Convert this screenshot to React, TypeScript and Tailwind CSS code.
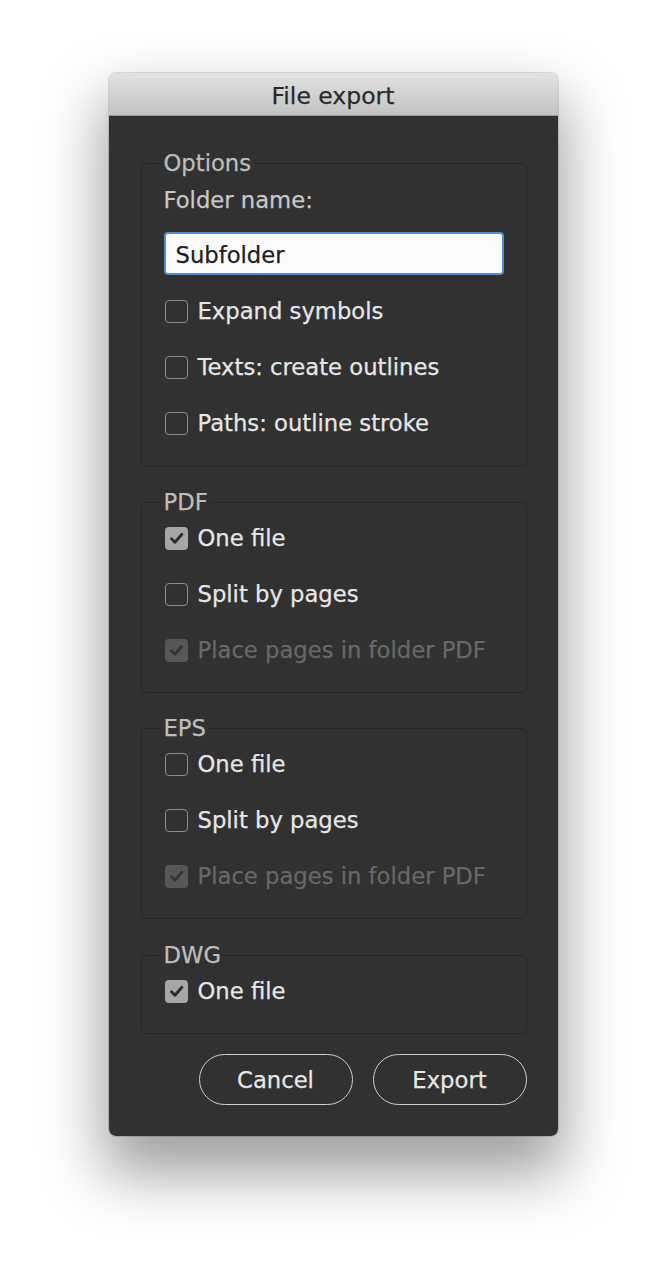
import React from "react";

function Check({ checked = false, disabled = false }: { checked?: boolean; disabled?: boolean }) {
  if (checked) {
    return (
      <span
        className={
          "flex h-[23px] w-[23px] shrink-0 items-center justify-center rounded-[4px] " +
          (disabled ? "bg-[#575757]" : "bg-[#a6a6a6]")
        }
      >
        <svg width="23" height="23" viewBox="0 0 23 23" fill="none">
          <path
            d="M6.5 11.8 L10 15.2 L16.8 7.4"
            stroke={disabled ? "#353535" : "#2b2b2b"}
            strokeWidth="2.9"
            strokeLinecap="round"
            strokeLinejoin="round"
          />
        </svg>
      </span>
    );
  }
  return <span className="h-[23px] w-[23px] shrink-0 rounded-[4px] border-[1.5px] border-[#8c8c8c]" />;
}

function Row({ label, checked, disabled }: { label: string; checked?: boolean; disabled?: boolean }) {
  return (
    <div className="flex h-[26px] items-center gap-[10px] pl-[1px]">
      <Check checked={checked} disabled={disabled} />
      <span className={disabled ? "text-[#686868]" : "text-[#e6e6e6]"}>{label}</span>
    </div>
  );
}

function Group({ title, className, children }: { title: string; className?: string; children: React.ReactNode }) {
  return (
    <fieldset className={"rounded-[5px] border border-[#262626] pl-[22px] pr-[22px] " + (className ?? "")}>
      <legend className="ml-[-3px] px-[3px] text-[#bdbdbd]">{title}</legend>
      <div className="flex flex-col pt-[10px]">{children}</div>
    </fieldset>
  );
}

export default function App() {
  return (
    <div
      className="min-h-[1280px] w-full bg-white pt-[73px] text-[22.7px] leading-[26px] [-webkit-text-stroke:0.25px_currentColor]"
      style={{ fontFamily: '"DejaVu Sans", "Noto Sans", sans-serif' }}
    >
      <div className="mx-auto w-[449px] overflow-hidden rounded-[7px] shadow-[0_32px_60px_6px_rgba(0,0,0,0.38),0_0_0_1px_rgba(0,0,0,0.12)]">
        <div className="flex h-[43px] items-center justify-center border-b border-[#9a9a9a] bg-gradient-to-b from-[#e2e2e2] to-[#c2c2c2] pt-[4px] text-[23.5px] text-[#2a2a2a]">
          File export
        </div>
        <div className="flex flex-col bg-[#313131] pl-[32px] pr-[31px] pt-[34px] pb-[31px]">
          <div className="flex flex-col">
            <Group title="Options" className="pb-[30px]">
              <div className="pt-[1px] text-[#c8c8c8]">Folder name:</div>
              <div className="mt-[19px] flex h-[43px] items-center rounded-[4px] border-2 border-[#4f8fd6] bg-[#fbfbfb] pl-[10px] pt-[2px] text-[#1e1e1e]">
                Subfolder
              </div>
              <div className="mt-[23px] flex flex-col gap-[30px]">
                <Row label="Expand symbols" />
                <Row label="Texts: create outlines" />
                <Row label="Paths: outline stroke" />
              </div>
            </Group>
            <Group title="PDF" className="mt-[22px] pb-[29px]">
              <div className="flex flex-col gap-[30px]">
                <Row label="One file" checked />
                <Row label="Split by pages" />
                <Row label="Place pages in folder PDF" checked disabled />
              </div>
            </Group>
            <Group title="EPS" className="mt-[22px] pb-[29px]">
              <div className="flex flex-col gap-[30px]">
                <Row label="One file" />
                <Row label="Split by pages" />
                <Row label="Place pages in folder PDF" checked disabled />
              </div>
            </Group>
            <Group title="DWG" className="mt-[23px] pb-[29px]">
              <Row label="One file" checked />
            </Group>
          </div>
          <div className="mt-[20px] flex justify-end gap-[20px]">
            <button className="h-[51px] w-[154px] rounded-full border-[1.5px] border-[#cfcfcf] text-[#e6e6e6]">
              Cancel
            </button>
            <button className="h-[51px] w-[154px] rounded-full border-[1.5px] border-[#cfcfcf] text-[#e6e6e6]">
              Export
            </button>
          </div>
        </div>
      </div>
    </div>
  );
}
